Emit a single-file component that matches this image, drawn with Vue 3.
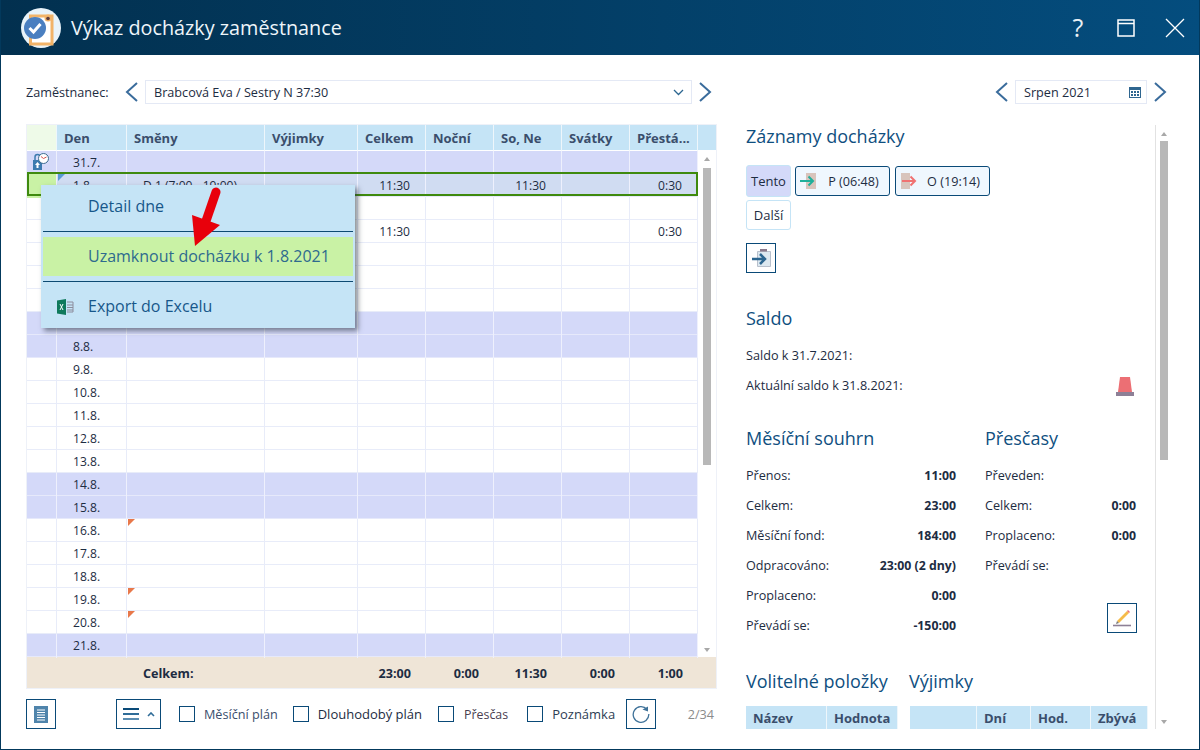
<script setup>
const columns = ['Den', 'Směny', 'Výjimky', 'Celkem', 'Noční', 'So, Ne', 'Svátky', 'Přestá...']
const weekend = [31, 1, 7, 8, 14, 15, 21]
const labels = ['31.7.']
for (let d = 1; d <= 21; d++) labels.push(d + '.8.')
const rows = labels.map((label, i) => {
  const day = i === 0 ? 31 : i
  return {
    label,
    weekend: weekend.includes(day),
    selected: i === 1,
    shift: i === 1 ? 'D 1 (7:00 - 19:00)' : '',
    total: i === 1 || i === 3 ? '11:30' : '',
    sone: i === 1 ? '11:30' : '',
    extra: i === 1 || i === 3 ? '0:30' : '',
    lock: i === 0,
    blue: i === 1,
    orange: i === 16 || i === 19 || i === 20
  }
})
const monthly = [
  ['Přenos:', '11:00'], ['Celkem:', '23:00'], ['Měsíční fond:', '184:00'],
  ['Odpracováno:', '23:00 (2 dny)'], ['Proplaceno:', '0:00'], ['Převádí se:', '-150:00']
]
const overtime = [['Převeden:', ''], ['Celkem:', '0:00'], ['Proplaceno:', '0:00'], ['Převádí se:', '']]
const checks = [
  { label: 'Měsíční plán', cls: 'c1' }, { label: 'Dlouhodobý plán', cls: 'c2' },
  { label: 'Přesčas', cls: 'c3' }, { label: 'Poznámka', cls: 'c4' }
]
</script>

<template>
  <div class="window">
    <header class="titlebar">
      <svg class="logo" width="40" height="40" viewBox="0 0 40 40">
        <circle cx="20" cy="20" r="20" fill="#e9f3f9" />
        <path d="M9.500 36V8h21.500v28z" fill="#fff" stroke="#f2b368" stroke-width="3" />
        <circle cx="27" cy="10" r="3.500" fill="#f2b368" />
        <circle cx="27" cy="10.500" r="1.800" fill="#5c3a3a" />
        <circle cx="14" cy="20" r="11" fill="#4a7fc0" />
        <path d="M8.500 20l4 4 7-8" fill="none" stroke="#fff" stroke-width="3" />
      </svg>
      <h1>Výkaz docházky zaměstnance</h1>
      <div class="win-actions">
        <span class="help">?</span>
        <svg width="18" height="18" viewBox="0 0 18 18"><path d="M1 1h16v16H1zM1 4.500h16" fill="none" stroke="#fff" stroke-width="1.500" /></svg>
        <svg width="20" height="20" viewBox="0 0 20 20"><path d="M1 1l18 18M19 1L1 19" stroke="#fff" stroke-width="1.300" /></svg>
      </div>
    </header>

    <main class="content">
      <div class="toolbar">
        <span class="emp-label">Zaměstnanec:</span>
        <svg class="chev first" width="14" height="20" viewBox="0 0 14 20"><path d="M12 1L2 10l10 9" fill="none" stroke="#3a6c9c" stroke-width="2" /></svg>
        <div class="select">
          <span>Brabcová Eva / Sestry N 37:30</span>
          <svg width="11" height="7" viewBox="0 0 11 7"><path d="M1 1l4.500 4.500L10 1" fill="none" stroke="#2c6690" stroke-width="1.300" /></svg>
        </div>
        <svg class="chev" width="14" height="20" viewBox="0 0 14 20"><path d="M2 1l10 9-10 9" fill="none" stroke="#3a6c9c" stroke-width="2" /></svg>
        <svg class="chev push" width="14" height="20" viewBox="0 0 14 20"><path d="M12 1L2 10l10 9" fill="none" stroke="#3a6c9c" stroke-width="2" /></svg>
        <div class="select month">
          <span>Srpen 2021</span>
          <svg width="12" height="12" viewBox="0 0 12 12">
            <path d="M0 1h12v11H0z" fill="#2f6690" />
            <path d="M1 4h10v7H1z" fill="#fff" />
            <path d="M2 5h2v2H2zM5 5h2v2H5zM8 5h2v2H8zM2 8h2v2H2zM5 8h2v2H5zM8 8h2v2H8z" fill="#2f6690" />
          </svg>
        </div>
        <svg class="chev" width="14" height="20" viewBox="0 0 14 20"><path d="M2 1l10 9-10 9" fill="none" stroke="#3a6c9c" stroke-width="2" /></svg>
      </div>

      <div class="columns">
        <section class="left">
          <div class="table">
            <div class="grid head">
              <div class="cell gutter"></div>
              <div v-for="c in columns" :key="c" class="cell">{{ c }}</div>
              <div class="cell"></div>
            </div>
            <div class="tbody">
              <div class="rows">
                <div
                  v-for="r in rows"
                  :key="r.label"
                  class="grid row"
                  :class="{ weekend: r.weekend, selected: r.selected }"
                >
                  <div class="cell gutter">
                    <svg v-if="r.lock" class="lock" width="17" height="17" viewBox="0 0 17 17">
                      <path d="M1 7h9v10H1z" fill="#3c7bb0" />
                      <path d="M3 7V4a2.500 2.500 0 0 1 5 0v3" fill="none" stroke="#3c7bb0" stroke-width="1.500" />
                      <path d="M5.500 9l2.500 3H6.500v3h-2v-3H3z" fill="#fff" />
                      <circle cx="11.500" cy="5.500" r="5" fill="#fff" stroke="#3c6c90" />
                      <path d="M11.500 5.500L9 3.500M11.500 5.500L14.500 4" stroke="#d9534f" stroke-width="1" />
                    </svg>
                  </div>
                  <div class="cell date"><i v-if="r.blue" class="tri blue"></i>{{ r.label }}</div>
                  <div class="cell shift"><i v-if="r.orange" class="tri orange"></i>{{ r.shift }}</div>
                  <div class="cell"></div>
                  <div class="cell num">{{ r.total }}</div>
                  <div class="cell num"></div>
                  <div class="cell num">{{ r.sone }}</div>
                  <div class="cell num"></div>
                  <div class="cell num">{{ r.extra }}</div>
                </div>
              </div>
              <div class="vbar">
                <i class="arrow up"></i>
                <div class="track"><div class="thumb"></div></div>
                <i class="arrow down"></i>
              </div>
            </div>
            <div class="grid foot">
              <div class="cell"></div>
              <div class="cell"></div>
              <div class="cell total-label">Celkem:</div>
              <div class="cell"></div>
              <div class="cell num">23:00</div>
              <div class="cell num">0:00</div>
              <div class="cell num">11:30</div>
              <div class="cell num">0:00</div>
              <div class="cell num">1:00</div>
              <div class="cell"></div>
            </div>

            <div class="menu">
              <div class="menu-item">Detail dne</div>
              <hr />
              <div class="menu-item active">Uzamknout docházku k 1.8.2021</div>
              <hr />
              <div class="menu-item">
                <svg class="xls" width="17" height="16" viewBox="0 0 17 16">
                  <path d="M0 1.500L9 0v16l-9-1.500z" fill="#0f7a5c" />
                  <path d="M3 5l3 6M6 5l-3 6" stroke="#fff" stroke-width="1" />
                  <path d="M10 3h6v10h-6M10 6h6M10 8.500h6M10 11h6" fill="none" stroke="#8c8c9c" />
                </svg>
                Export do Excelu
              </div>
            </div>
            <svg class="pointer" width="32" height="60" viewBox="0 0 32 60">
              <path d="M26 5L16 34" stroke="#e8000b" stroke-width="9" stroke-linecap="round" />
              <path d="M2 28l3 31 25-21z" fill="#e8000b" />
            </svg>
          </div>

          <div class="bottom">
            <button class="btn">
              <svg width="14" height="17" viewBox="0 0 14 17">
                <path d="M0 0h14v17H0z" fill="#4f84ab" />
                <path d="M3 4h8M3 6.500h8M3 9h8M3 11.500h8M3 14h8" stroke="#fff" />
              </svg>
            </button>
            <button class="btn wide">
              <svg width="17" height="12" viewBox="0 0 17 12"><path d="M0 1h16" stroke="#0a4a78" stroke-width="2" /><path d="M0 6h16" stroke="#2f6c98" stroke-width="2" /><path d="M0 11h16" stroke="#5b8cb0" stroke-width="2" /></svg>
              <svg width="8" height="5" viewBox="0 0 8 5"><path d="M1 4l3-3 3 3" fill="none" stroke="#2f6c98" stroke-width="1.600" /></svg>
            </button>
            <label v-for="c in checks" :key="c.label" class="check" :class="c.cls">
              <span class="box"></span>{{ c.label }}
            </label>
            <button class="btn refresh">
              <svg width="18" height="18" viewBox="0 0 18 18">
                <path d="M15 4.500A7.800 7.800 0 1 0 16.800 9" fill="none" stroke="#3f7299" stroke-width="1.300" />
                <path d="M10.500 4.500L16 1.500v5z" fill="#3f7299" />
              </svg>
            </button>
            <span class="pager">2/34</span>
          </div>
        </section>

        <aside class="right">
          <div class="panel">
            <h2 class="first-head">Záznamy docházky</h2>
            <div class="records">
              <button class="rec tento">Tento</button>
              <button class="rec io">
                <svg width="18" height="16" viewBox="0 0 18 16">
                  <path d="M7 0h10v16H7z" fill="#d8c4bc" />
                  <path d="M1 8h13M9.500 3.500L14 8l-4.500 4.500" fill="none" stroke="#1faf9b" stroke-width="2" />
                </svg>
                <span>P (06:48)</span>
              </button>
              <button class="rec io">
                <svg width="18" height="16" viewBox="0 0 18 16">
                  <path d="M2 0h9v16H2z" fill="#d8c4bc" />
                  <path d="M3 8h13M11.500 3.500L16 8l-4.500 4.500" fill="none" stroke="#f07272" stroke-width="2" />
                </svg>
                <span>O (19:14)</span>
              </button>
              <button class="rec dalsi">Další</button>
            </div>
            <button class="btn record-btn">
              <svg width="20" height="18" viewBox="0 0 20 18">
                <path d="M6.500 2.500h13v15h-13z" fill="#dce8f0" stroke="#b8c0cc" />
                <path d="M9 0h7v2.500H9z" fill="#8a7a8c" />
                <path d="M1 10h13M9 5l5 5-5 5" fill="none" stroke="#2c6690" stroke-width="2.500" />
              </svg>
            </button>

            <h2 class="saldo">Saldo</h2>
            <p class="line first-line">Saldo k 31.7.2021:</p>
            <div class="line alarm-line">
              <span>Aktuální saldo k 31.8.2021:</span>
              <svg width="18" height="19" viewBox="0 0 18 19">
                <path d="M4 0h10l2 15H2z" fill="#ec6f74" />
                <path d="M0 15h18v4H0z" fill="#8d8096" />
              </svg>
            </div>

            <div class="summary">
              <div class="monthly">
                <h2>Měsíční souhrn</h2>
                <div v-for="m in monthly" :key="m[0]" class="kv"><span>{{ m[0] }}</span><b>{{ m[1] }}</b></div>
              </div>
              <div class="overtime">
                <h2>Přesčasy</h2>
                <div v-for="m in overtime" :key="m[0]" class="kv"><span>{{ m[0] }}</span><b>{{ m[1] }}</b></div>
                <button class="btn pencil">
                  <svg width="18" height="18" viewBox="0 0 18 18">
                    <path d="M0 16.500h18" stroke="#8d8096" stroke-width="1.600" />
                    <path d="M4 12L14 2l2 2L6 14z" fill="#f5bb4a" />
                    <path d="M14 2l1-1 2 2-1 1z" fill="#ec6f74" />
                    <path d="M4 12l-1 3 3-1z" fill="#7a7a7a" />
                  </svg>
                </button>
              </div>
            </div>

            <div class="extras">
              <div class="opt">
                <h2>Volitelné položky</h2>
                <div class="mini m1"><span>Název</span><span>Hodnota</span></div>
              </div>
              <div class="exc">
                <h2>Výjimky</h2>
                <div class="mini m2"><span></span><span>Dní</span><span>Hod.</span><span>Zbývá</span></div>
              </div>
            </div>
          </div>
          <div class="pbar">
            <i class="arrow up"></i>
            <div class="track"><div class="thumb"></div></div>
            <i class="arrow down"></i>
          </div>
        </aside>
      </div>
    </main>
  </div>
</template>

<style>
html, body { margin: 0; background: #fff; }
</style>

<style scoped>
* { box-sizing: border-box; }
.window {
  width: 1200px; height: 750px; overflow: hidden; display: flex; flex-direction: column;
  border: 1px solid #03395c; border-top: 0; background: #fff;
  font-family: "Open Sans", "Noto Sans", sans-serif; font-size: 12.650px; color: #1d2c42;
}
.titlebar {
  height: 55px; flex: none; display: flex; align-items: center; padding-left: 21px; margin: 0 -1px;
  background: linear-gradient(90deg, #02304f, #044d7e);
}
.logo { flex: none; }
h1 { margin: 0 0 0 10px; font-size: 19.800px; font-weight: 400; color: #eef5fa; }
.win-actions { margin-left: auto; display: flex; align-items: center; padding-right: 15px; }
.help { color: #e8f0f5; font-size: 25px; width: 20px; text-align: center; margin-right: 29px; line-height: 1; }
.win-actions svg:nth-of-type(1) { margin-right: 30px; }

.content { flex: 1; min-height: 0; display: flex; flex-direction: column; padding: 25px 0 0 25px; }
.toolbar { height: 23px; flex: none; display: flex; align-items: center; }
.emp-label { width: 99px; flex: none; padding-top: 1px; }
.chev { flex: none; margin-right: 6px; }
.chev.push { margin-left: auto; margin-right: 6px; }
.select {
  height: 24px; width: 547px; margin-right: 6px; border: 1px solid #e4e9f5;
  display: flex; align-items: center; justify-content: space-between; padding: 1px 7px 0 8px;
}
.select.month { width: 132px; margin-right: 6px; padding-right: 5px; }
.toolbar > .chev:last-child { margin-right: 32px; }

.columns { flex: 1; min-height: 0; display: flex; margin-top: 22px; }
.left { width: 710px; flex: none; display: flex; flex-direction: column; padding-left: 1px; }
.table { width: 689px; position: relative; box-shadow: 0 0 0 1px #eef1f8; }
.grid { display: grid; grid-template-columns: 30px 70px 138px 93px 68px 68px 68px 68px 68px; }
.head { grid-template-columns: 30px 70px 138px 93px 68px 68px 68px 68px 68px 18px; height: 26px; background: #c5e4f6; font-weight: 700; font-size: 13px; color: #3a4e6c; }
.head .cell { display: flex; align-items: center; padding-left: 7px; border-right: 1px solid #eef6fb; border-bottom: 1px solid #fff; }
.head .gutter { background: #eefae8; }
.head .cell:nth-child(n+10) { border-right: 0; padding: 0; }
.tbody { display: flex; }
.rows { width: 671px; flex: none; }
.row { height: 23px; border-bottom: 1px solid #e8ecf9; position: relative; line-height: 24px; font-size: 12.100px; }
.row .cell { border-right: 1px solid #e8ecf9; position: relative; white-space: nowrap; }
.row .gutter { border-right-color: #e8ecf9; }
.row.weekend { background: #d4d9f9; border-bottom-color: #e6e9fb; }
.row.weekend .cell { border-right-color: #eef0fd; }
.row.selected { background: #d0dcf2; }
.row.selected .gutter { background: #c9f2a5; }
.row.selected::after {
  content: ""; position: absolute; left: 0; right: 0; top: -2px; bottom: 0;
  border: 2px solid #3f8a0e; pointer-events: none;
}
.date { padding-left: 16px; }
.shift { padding-left: 16px; }
.num { text-align: right; padding-right: 15px; }
.lock { position: absolute; left: 5px; top: 2px; }
.tri { position: absolute; left: 1px; top: 0; width: 0; height: 0; border-style: solid; border-width: 7px 7px 0 0; border-color: transparent; }
.tri.blue { border-top-color: #5a9bd5; }
.tri.orange { border-top-color: #e8784a; }
.vbar { width: 18px; flex: none; display: flex; flex-direction: column; align-items: center; background: #fff; padding: 6px 0 5px; }
.arrow { display: block; width: 0; height: 0; border-left: 3.500px solid transparent; border-right: 3.500px solid transparent; flex: none; }
.arrow.up { border-bottom: 4px solid #a8a8a8; }
.arrow.down { border-top: 4px solid #a8a8a8; }
.track { flex: 1; width: 8px; }
.vbar .track { padding-top: 7px; }
.vbar .thumb { height: 297px; background: #b8b8b8; }
.foot { grid-template-columns: 30px 70px 138px 93px 68px 68px 68px 68px 68px 18px; height: 31px; background: #efe5d7; font-weight: 700; font-size: 12.600px; color: #1d2c42; line-height: 33px; }
.total-label { padding-left: 16px; }

.menu {
  position: absolute; left: 14px; top: 60px; width: 314px; height: 143px;
  background: #c5e4f6; box-shadow: 3px 3px 5px rgba(40, 50, 60, .55);
  padding: 2px 2px 0; color: #17578a; font-size: 16px;
}
.menu-item { height: 39px; display: flex; align-items: center; padding: 0 0 2px 45px; position: relative; }
.menu-item.active { background: #c9f2a5; color: #2e6a8e; }
.menu hr { border: 0; border-top: 1px solid #0d4a72; margin: 5px 0; }
.xls { position: absolute; left: 14px; top: 12px; }
.pointer { position: absolute; left: 163px; top: 62px; }

.bottom { display: flex; align-items: center; height: 30px; margin: 11px 0 0 -1px; width: 691px; }
.btn {
  width: 30px; height: 30px; flex: none; padding: 0; background: #fff; border: 1px solid #0a4a78;
  display: flex; align-items: center; justify-content: center;
}
.btn.wide { width: 45px; margin-left: 60px; margin-right: 18px; gap: 7px; }
.check { display: flex; align-items: center; color: #3a4e6c; }
.box { width: 16px; height: 16px; border: 1px solid #0a4a78; margin-right: 9px; flex: none; }
.c2 { margin-left: 15px; color: #1d2c42; font-size: 13px; }
.c3 { margin-left: 16px; color: #4a4050; font-size: 12.400px; }
.c4 { margin-left: 19px; color: #2e3e54; font-size: 13px; }
.c3 .box { margin-right: 10px; }
.refresh { margin-left: 11px; }
.pager { margin-left: auto; margin-right: 3px; color: #8b8b8b; }

.right { flex: 1; min-width: 0; display: flex; height: 604px; }
.panel { width: 420px; flex: none; border-right: 1px solid #e2e2e2; padding-left: 10px; height: 604px; overflow: hidden; }
h2 { margin: 0; font-size: 18px; font-weight: 400; color: #0f4f7f; line-height: 24px; }
.first-head { margin-top: -1px; }
.records { display: flex; flex-wrap: wrap; width: 260px; gap: 4px; margin-top: 18px; }
.rec { font: inherit; font-size: 13px; color: #1d2c42; height: 30px; border-radius: 3px; padding: 0; margin: 0; }
.tento { width: 45px; height: 32px; margin: -1px 0; background: #d4d9f9; border: 1px solid #c5e4f6; }
.io { width: 95px; font-size: 12.650px; background: #eff7fe; border: 1px solid #0a4a78; display: flex; align-items: center; padding-left: 3px; }
.io + .io { margin-left: 1px; }
.io span { flex: 1; text-align: center; padding-left: 9px; padding-right: 8px; white-space: nowrap; }
.dalsi { width: 45px; background: #fff; border: 1px solid #c5e4f6; }
.record-btn { margin-top: 13px; }
.saldo { margin-top: 33px; }
.line { margin: 0; }
.first-line { margin-top: 17px; line-height: 16px; }
.alarm-line { margin-top: 14px; width: 388px; display: flex; justify-content: space-between; align-items: flex-start; height: 30px; line-height: 16px; }
.summary { display: flex; margin-top: 19px; }
.monthly { width: 210px; }
.overtime { width: 151px; margin-left: 29px; position: relative; }
.summary h2 { margin-bottom: 10px; }
.kv { height: 30px; display: flex; justify-content: space-between; align-items: center; }
.kv b { font-weight: 700; font-size: 12.300px; }
.pencil { position: absolute; left: 122px; top: 177px; }
.extras { display: flex; margin-top: 29px; }
.opt { width: 152px; }
.exc { margin-left: 12px; width: 238px; }
.extras h2 { white-space: nowrap; margin-bottom: 13px; }
.exc h2 { margin-left: -1px; }
.mini { display: grid; height: 24px; background: #c5e4f6; font-weight: 700; font-size: 13px; color: #3a4e6c; }
.mini span { display: flex; align-items: center; padding-left: 7px; border-right: 1px solid #eef6fb; }
.m1 { grid-template-columns: 81px 71px; }
.m2 { grid-template-columns: 67px 54px 60px 57px; }
.pbar { width: 8px; margin-left: 4px; display: flex; flex-direction: column; align-items: center; padding: 7px 0 5px; }
.pbar .track { padding-top: 5px; }
.pbar .thumb { height: 319px; background: #b8b8b8; }
</style>
